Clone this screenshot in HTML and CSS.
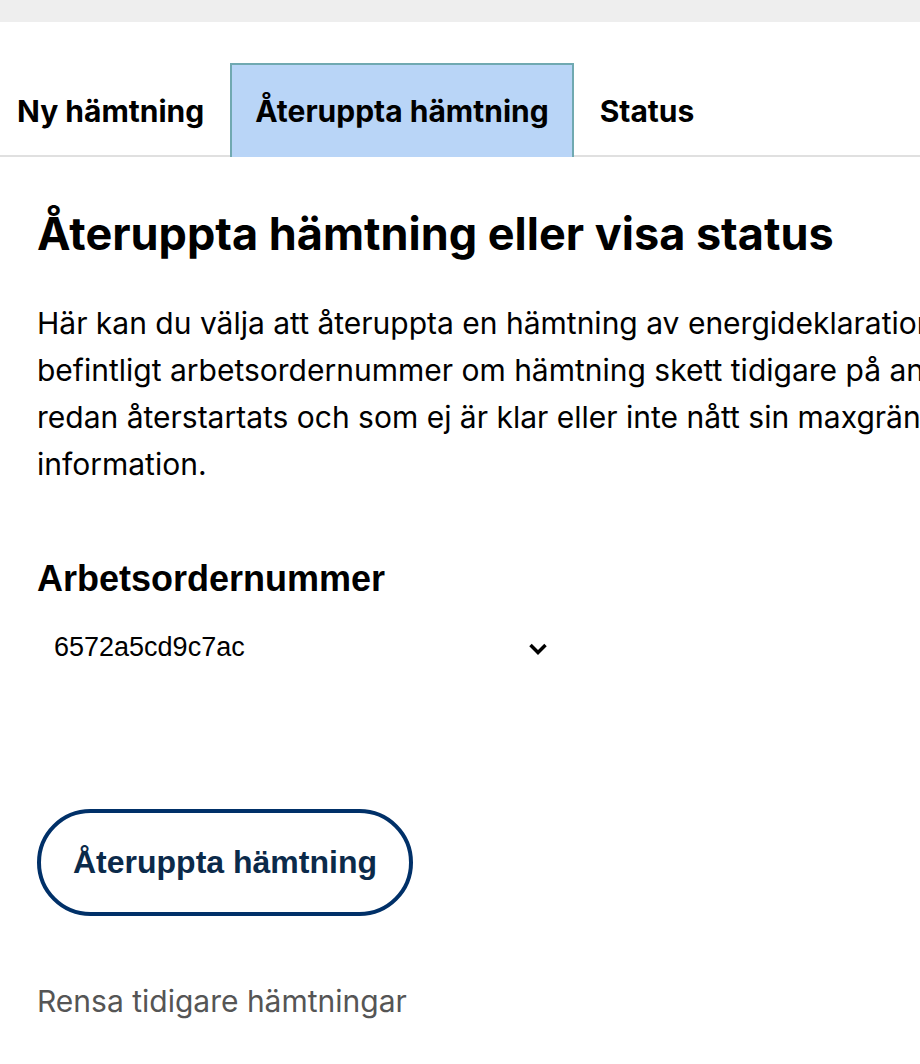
FILE: index.html
```html
<!DOCTYPE html>
<html lang="sv">
<head>
    <meta charset="UTF-8">
    <meta name="viewport" content="width=device-width, initial-scale=1.0">
    <title>Återuppta hämtning</title>
    <link rel="stylesheet" href="styles.css">
</head>
<body>
    <div class="topbar"></div>

    <div class="tabs">
        <a class="tab" href="#">Ny hämtning</a>
        <a class="tab active" href="#">Återuppta hämtning</a>
        <a class="tab" href="#">Status</a>
    </div>

    <div class="content">
        <h1>Återuppta hämtning eller visa status</h1>
        <p class="intro">Här kan du välja att återuppta en hämtning av energideklarationer genom att välja ett<br>
            befintligt arbetsordernummer om hämtning skett tidigare på annan dator. En hämtning som<br>
            redan återstartats och som ej är klar eller inte nått sin maxgräns visar endast status<br>
            information.</p>

        <label class="field-label" for="order">Arbetsordernummer</label>
        <div class="select-wrap">
            <select id="order">
                <option>6572a5cd9c7ac</option>
            </select>
            <svg class="chevron" width="20" height="14" viewBox="0 0 20 14">
                <path d="M2.5 3 L10 10.5 L17.5 3" fill="none" stroke="#000" stroke-width="3.5"/>
            </svg>
        </div>

        <button class="btn-resume">Återuppta hämtning</button>

        <a class="clear-link" href="#">Rensa tidigare hämtningar</a>
    </div>
</body>
</html>
```

FILE: styles.css
```css
body {
    margin: 0;
    font-family: Inter, "Noto Sans", sans-serif;
    color: #000;
    background-color: #fff;
    overflow-x: hidden;
}
.topbar {
    height: 22px;
    background-color: #eeeeee;
}
.tabs {
    display: flex;
    gap: 1px;
    margin-top: 41px;
    margin-left: -8px;
    border-bottom: 2px solid #e0e0e0;
}
.tab {
    display: flex;
    align-items: center;
    height: 94px;
    padding: 0 23px;
    font-size: 30px;
    font-weight: 700;
    color: #000;
    text-decoration: none;
    box-sizing: border-box;
    border: 2px solid transparent;
    border-bottom: none;
    margin-bottom: -2px;
}
.tab.active {
    background-color: #b9d5f7;
    border-color: #70a9b1;
}
.content {
    padding: 0 37px;
}
h1 {
    margin: 50px 0 0;
    font-size: 45px;
    font-weight: 700;
    line-height: 54px;
}
.intro {
    margin: 39px 0 0;
    font-size: 30px;
    line-height: 47px;
    white-space: nowrap;
}
.field-label {
    display: block;
    margin-top: 70px;
    font-family: "Liberation Sans", Arial, sans-serif;
    font-size: 36px;
    font-weight: 700;
}
.select-wrap {
    position: relative;
    width: 523px;
    margin-top: 26px;
}
select {
    appearance: none;
    width: 100%;
    border: none;
    background: transparent;
    padding: 6px 17px;
    font-family: "Liberation Sans", Arial, sans-serif;
    font-size: 27px;
    color: #000;
}
.chevron {
    position: absolute;
    right: 12px;
    top: 16px;
    pointer-events: none;
}
.btn-resume {
    display: block;
    margin-top: 141px;
    padding: 31px 32px;
    border: 4px solid #003068;
    border-radius: 60px;
    background-color: #fff;
    color: #0b2a4a;
    font-family: "Liberation Sans", Arial, sans-serif;
    font-size: 32px;
    font-weight: 700;
    cursor: pointer;
}
.clear-link {
    display: inline-block;
    margin-top: 67px;
    font-size: 30px;
    color: #555;
    text-decoration: none;
}
```
